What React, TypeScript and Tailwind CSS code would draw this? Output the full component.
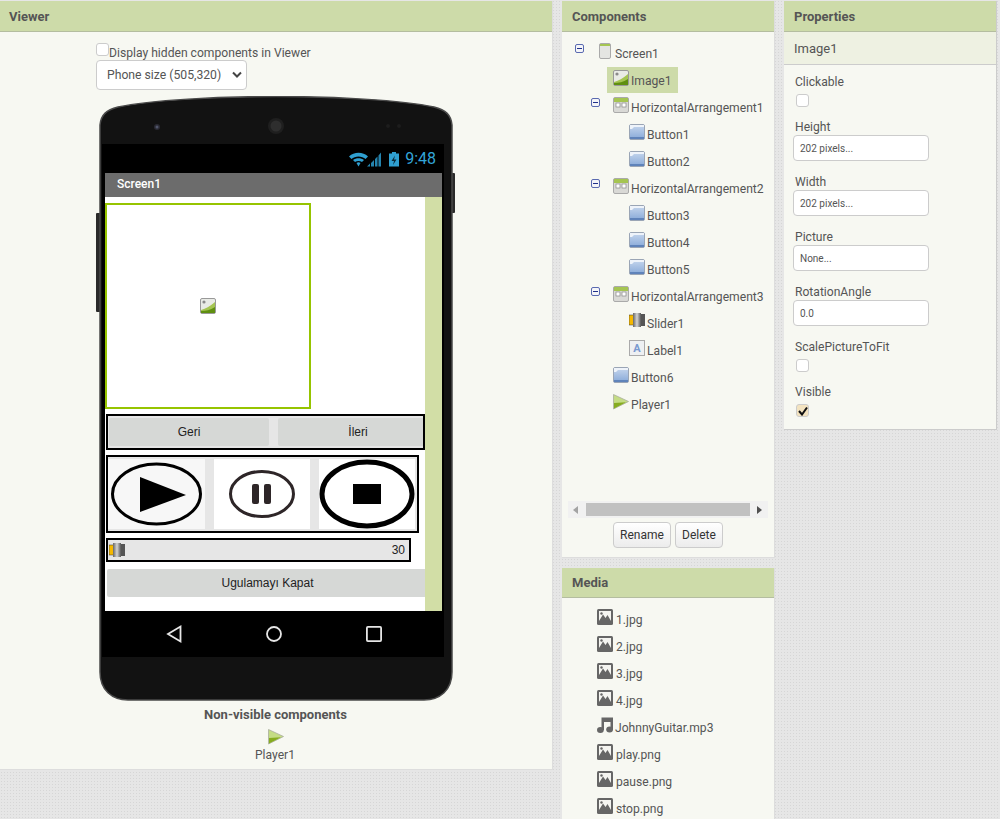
import React from 'react';

const ScreenIcon = () => (
  <svg width="16" height="16" viewBox="0 0 16 16">
    <rect x="2.5" y="0.5" width="11" height="15" rx="1.5" fill="#e4e5e2" stroke="#aaa" />
    <rect x="3" y="1" width="10" height="2" fill="#a5c552" />
  </svg>
);

const ImageIcon = () => (
  <svg width="16" height="16" viewBox="0 0 16 16">
    <rect x="0.5" y="0.5" width="15" height="15" rx="1.5" fill="#e9ebe6" stroke="#999" />
    <circle cx="4" cy="4" r="1.6" fill="#8a8a8a" />
    <path d="M1 12 C5 11 9 9 15 4 V15 H1 Z" fill="#a5c552" />
    <path d="M1 15 V13 C6 13 10 12 15 9 V15 Z" fill="#5f8f10" />
  </svg>
);

const ArrangementIcon = () => (
  <svg width="16" height="16" viewBox="0 0 16 16">
    <rect x="0.5" y="0.5" width="15" height="15" rx="1.5" fill="#d9d9d6" stroke="#aaa" />
    <rect x="1" y="1" width="14" height="4" fill="#a5c552" />
    <rect x="3" y="6" width="4" height="4" fill="#fff" stroke="#888" strokeWidth="0.7" />
    <rect x="9" y="6" width="4" height="4" fill="#fff" stroke="#888" strokeWidth="0.7" />
  </svg>
);

const ButtonIcon = () => (
  <svg width="16" height="16" viewBox="0 0 16 16">
    <defs>
      <linearGradient id="btn-grad" x1="0" y1="0" x2="0" y2="1">
        <stop offset="0" stopColor="#c8d8ee" />
        <stop offset="1" stopColor="#86a8d8" />
      </linearGradient>
    </defs>
    <rect x="0.5" y="0.5" width="15" height="15" rx="1.5" fill="url(#btn-grad)" stroke="#9aa5b5" />
    <path d="M1 1 H15 V3 H5 L3 5 H1 Z" fill="#eef3fa" />
    <rect x="1" y="13" width="14" height="2" fill="#5f83ba" />
  </svg>
);

const SliderIcon = () => (
  <svg width="16" height="14" viewBox="0 0 16 14">
    <defs>
      <linearGradient id="slider-grad" x1="0" y1="0" x2="1" y2="0">
        <stop offset="0" stopColor="#666" />
        <stop offset="0.5" stopColor="#d4d4d4" />
        <stop offset="1" stopColor="#555" />
      </linearGradient>
    </defs>
    <rect x="0" y="2" width="5" height="10" fill="#f5b800" stroke="#333" strokeWidth="0.5" />
    <rect x="4" y="0" width="8" height="14" fill="url(#slider-grad)" />
    <rect x="12" y="1" width="4" height="12" fill="#555" />
  </svg>
);

const LabelIcon = () => (
  <svg width="16" height="16" viewBox="0 0 16 16">
    <rect x="0.5" y="0.5" width="15" height="15" fill="#eef0f2" stroke="#aaa" />
    <text x="8" y="12" textAnchor="middle" fontSize="11" fontWeight="700" fontFamily="Roboto, sans-serif" fill="#7a9ad0">A</text>
  </svg>
);

const PlayerIcon = () => (
  <svg width="16" height="16" viewBox="0 0 16 16">
    <path d="M0.5 0.5 L15.5 7.5 L0.5 15 Z" fill="#c4dc84" stroke="#a9ad9e" strokeWidth="0.8" />
    <path d="M1 9 L13 8.2 L1 14.5 Z" fill="#86ac20" />
  </svg>
);

const PhotoIcon = () => (
  <svg width="16" height="16" viewBox="0 0 16 16">
    <rect width="16" height="16" rx="1.5" fill="#666" />
    <rect x="2" y="2" width="12" height="10" fill="#f4f4f0" />
    <path d="M2 12 L6 5.5 L8.5 9 L10.5 6 L14 12 Z" fill="#666" />
    <circle cx="4.5" cy="4.5" r="1.2" fill="#666" />
  </svg>
);

const MusicIcon = () => (
  <svg width="16" height="16" viewBox="0 0 16 16" fill="#666">
    <path d="M4.5 0.5 H16 V12.5 H13.5 V5 H7 V13 H4.5 Z" />
    <ellipse cx="3.4" cy="13" rx="3.4" ry="3" />
    <ellipse cx="12.6" cy="12.6" rx="3.4" ry="3" />
  </svg>
);

const Minus = () => (
  <svg width="9" height="9" viewBox="0 0 9 9" className="mt-[4px] shrink-0">
    <rect x="0.5" y="0.5" width="8" height="8" rx="1.5" fill="#f4f5f8" stroke="#5a6ab0" />
    <rect x="2" y="4" width="5" height="1" fill="#20308a" />
  </svg>
);

const treeRows = [
  { name: 'Screen1', icon: <ScreenIcon />, pad: 'pl-[13px]', minus: true },
  { name: 'Image1', icon: <ImageIcon />, pad: 'pl-[45px]', selected: true },
  { name: 'HorizontalArrangement1', icon: <ArrangementIcon />, pad: 'pl-[29px]', minus: true },
  { name: 'Button1', icon: <ButtonIcon />, pad: 'pl-[61px]' },
  { name: 'Button2', icon: <ButtonIcon />, pad: 'pl-[61px]' },
  { name: 'HorizontalArrangement2', icon: <ArrangementIcon />, pad: 'pl-[29px]', minus: true },
  { name: 'Button3', icon: <ButtonIcon />, pad: 'pl-[61px]' },
  { name: 'Button4', icon: <ButtonIcon />, pad: 'pl-[61px]' },
  { name: 'Button5', icon: <ButtonIcon />, pad: 'pl-[61px]' },
  { name: 'HorizontalArrangement3', icon: <ArrangementIcon />, pad: 'pl-[29px]', minus: true },
  { name: 'Slider1', icon: <SliderIcon />, pad: 'pl-[61px]' },
  { name: 'Label1', icon: <LabelIcon />, pad: 'pl-[61px]' },
  { name: 'Button6', icon: <ButtonIcon />, pad: 'pl-[45px]' },
  { name: 'Player1', icon: <PlayerIcon />, pad: 'pl-[45px]' },
];

const mediaFiles = ['1.jpg', '2.jpg', '3.jpg', '4.jpg', 'JohnnyGuitar.mp3', 'play.png', 'pause.png', 'stop.png'];

const PanelHeader = ({ title, pad, size = 'h-[31px] pt-[2px]' }: { title: string; pad: string; size?: string }) => (
  <div className={`shrink-0 bg-[#cddba9] border-b border-[#b4bda0] flex items-center text-[13px] font-bold text-[#555] ${size} ${pad}`}>
    {title}
  </div>
);

const Checkbox = ({ checked }: { checked?: boolean }) => (
  <div className={`w-[13px] h-[13px] shrink-0 rounded-[3px] border border-[#ccc] flex items-center justify-center ${checked ? 'bg-[#f3e3c0]' : 'bg-white'}`}>
    {checked && (
      <svg width="10" height="10" viewBox="0 0 10 10">
        <path d="M1 5 L4 8.5 L9 1.5" fill="none" stroke="#111" strokeWidth="2" />
      </svg>
    )}
  </div>
);

const PropLabel = ({ children }: { children: React.ReactNode }) => (
  <div className="h-[16px] leading-[16px] text-[12.1px] text-[#555] pl-[2px]">{children}</div>
);

const PropInput = ({ value }: { value: string }) => (
  <div className="w-[136px] h-[26px] rounded-[4px] border border-[#ccc] bg-white pl-[6px] flex items-center text-[10px] text-[#555]">
    {value}
  </div>
);

const PhoneShell = () => (
  <svg width="360" height="605" viewBox="96 96 360 605" className="absolute left-0 top-0">
    <rect x="96" y="213" width="5" height="99" rx="1" fill="#2a2a2a" />
    <rect x="451" y="173" width="4" height="40" rx="1" fill="#2a2a2a" />
    <path
      d="M100 672 L100 125 C101 115 106 110 118 107 C150 100 220 96.5 276 96.5 C332 96.5 402 100 434 107 C446 110 451 115 452 125 L452 672 C452 690 440 700 424 700 L128 700 C112 700 100 690 100 672 Z"
      fill="#121212"
      stroke="#4a4a4a"
      strokeWidth="1.5"
    />
    <circle cx="157" cy="127" r="3" fill="#2a2a33" />
    <circle cx="157" cy="127" r="1.5" fill="#50556a" />
    <circle cx="276" cy="126" r="8" fill="#1f1f1f" />
    <circle cx="276" cy="126" r="5.5" fill="#2e2e2e" />
    <circle cx="388" cy="126" r="2" fill="#1d1d1d" />
    <circle cx="399" cy="126" r="2" fill="#1d1d1d" />
  </svg>
);

const StatusIcons = () => (
  <svg width="52" height="16" viewBox="0 0 52 16" className="shrink-0">
    <path d="M2 5.5 C7 0.5 16 0.5 21 5.5 L18.5 8 C15 4.5 8 4.5 4.5 8 Z" fill="#2f9fd0" />
    <path d="M6 9 C9 6.5 14 6.5 17 9 L15 11 C13 9.5 10 9.5 8 11 Z" fill="#2f9fd0" />
    <path d="M9.5 12 C11 11 12 11 13.5 12 L11.5 15.5 Z" fill="#2f9fd0" />
    <path d="M20 15.5 H23 V12.5 L20 15.5 Z M24 15.5 H27 V9 L24 12 Z M28 15.5 H30.5 V5.5 L28 8 Z M31.5 15.5 H34 V1.5 L31.5 4.5 Z" fill="#2583ad" />
    <rect x="42" y="2.5" width="10" height="13" fill="#2f9fd0" />
    <rect x="45" y="1" width="4" height="2" fill="#2f9fd0" />
    <path d="M48 4.5 L44.5 10 H47 L46 14 L49.5 8.5 H47 Z" fill="#0b2a38" />
  </svg>
);

const NavBar = () => (
  <div className="h-[46px] flex items-center pl-[60px] gap-[76px]">
    <svg width="24" height="24" viewBox="0 0 24 24">
      <path d="M18.5 4.5 V19.5 L6 12 Z" fill="none" stroke="#e6e6e6" strokeWidth="1.8" />
    </svg>
    <svg width="24" height="24" viewBox="0 0 24 24">
      <circle cx="12" cy="12" r="7" fill="none" stroke="#e6e6e6" strokeWidth="1.8" />
    </svg>
    <svg width="24" height="24" viewBox="0 0 24 24">
      <rect x="4.9" y="4.9" width="14.2" height="14.2" rx="1" fill="none" stroke="#e6e6e6" strokeWidth="1.8" />
    </svg>
  </div>
);

const PlayPic = () => (
  <svg width="97" height="70" viewBox="0 0 97 70" className="bg-[#f7f7f7]">
    <ellipse cx="48.5" cy="35" rx="44" ry="30" fill="none" stroke="#000" strokeWidth="3" />
    <path d="M32 18 L78 36 L32 53 Z" fill="#000" />
  </svg>
);

const PausePic = () => (
  <svg width="96" height="70" viewBox="0 0 96 70" className="bg-white">
    <ellipse cx="48" cy="35" rx="31.5" ry="22.5" fill="none" stroke="#2e2628" strokeWidth="3" />
    <rect x="38" y="25" width="7" height="20" rx="2" fill="#2e2628" />
    <rect x="50" y="25" width="7" height="20" rx="2" fill="#2e2628" />
  </svg>
);

const StopPic = () => (
  <svg width="96" height="70" viewBox="0 0 96 70" className="bg-white">
    <ellipse cx="48" cy="35" rx="45" ry="32" fill="none" stroke="#000" strokeWidth="5" />
    <rect x="34" y="25" width="28" height="20" fill="#000" />
  </svg>
);

const PhoneScreen = () => (
  <div className="w-[342px] bg-black">
    <div className="h-[29px] flex items-center justify-end pr-[8px] gap-[6px]">
      <StatusIcons />
      <span className="text-[16px] text-[#33a5d8] leading-none">9:48</span>
    </div>
    <div className="ml-[3px] w-[337px]">
      <div className="h-[24px] bg-[#6c6c6c] pl-[12px] pb-[2px] flex items-center text-[12px] font-medium text-white">Screen1</div>
      <div className="flex h-[414px]">
        <div className="w-[320px] bg-white overflow-hidden pt-[6px] font-['Liberation_Sans',Arial,sans-serif] text-[12px] text-[#222]">
          <div className="w-[206px] h-[206px] border-2 border-[#96c400] flex items-center justify-center">
            <ImageIcon />
          </div>
          <div className="mt-[5px] ml-px w-[319px] h-[36px] border-2 border-black bg-[#e6e6e6] flex gap-[9px] pl-px py-[2px] overflow-hidden">
            <div className="w-[160px] shrink-0 bg-[#d6d8d6] rounded-[2px] flex items-center justify-center">Geri</div>
            <div className="w-[160px] shrink-0 bg-[#d6d8d6] rounded-[2px] flex items-center justify-center">İleri</div>
          </div>
          <div className="mt-[5px] ml-px w-[313px] h-[78px] border-2 border-black bg-[#e6e6e6] flex gap-[9px] py-[2px]">
            <PlayPic />
            <PausePic />
            <StopPic />
          </div>
          <div className="mt-[5px] ml-px w-[305px] h-[24px] border-2 border-black bg-[#e6e6e6] flex items-center justify-between pl-px pr-[4px]">
            <SliderIcon />
            <span>30</span>
          </div>
          <div className="mt-[7px] ml-[2px] w-[330px] h-[28px] bg-[#d6d8d6] rounded-[2px] flex items-center justify-center pr-[9px]">
            Ugulamayı Kapat
          </div>
        </div>
        <div className="w-[17px] bg-[#d2dea6]" />
      </div>
    </div>
    <NavBar />
  </div>
);

export default function App() {
  return (
    <div className="w-[1000px] h-[819px] overflow-hidden flex items-start gap-[9px] pt-px bg-[#e6e6e6] bg-[radial-gradient(#d6d6d6_1px,transparent_1px)] bg-[length:3px_3px] font-['Roboto',sans-serif] text-[#555]">
      {/* Viewer */}
      <div className="w-[553px] h-[769px] shrink-0 bg-[#f7f8f2] border-r border-b border-[#ddd]">
        <PanelHeader title="Viewer" pad="pl-[9px]" />
        <div className="ml-[96px] mt-[11px] h-[16px] flex items-start text-[12.13px] leading-[16px]">
          <Checkbox />
          <span className="mt-[2px]">Display hidden components in Viewer</span>
        </div>
        <div className="ml-[96px] mt-px w-[151px] h-[30px] bg-white border border-[#ccc] rounded-[4px] flex items-center justify-between pl-[10px] pr-[3px] text-[12.2px]">
          <span>Phone size (505,320)</span>
          <svg width="12" height="8" viewBox="0 0 12 8">
            <path d="M2 1.5 L6 5.5 L10 1.5" fill="none" stroke="#444" strokeWidth="2" />
          </svg>
        </div>
        <div className="relative ml-[96px] mt-[6px] w-[360px] h-[605px] pt-[48px] pl-[6px]">
          <PhoneShell />
          <div className="relative">
            <PhoneScreen />
          </div>
        </div>
        <div className="mt-[6px] text-center text-[13px] font-bold leading-[16px] pr-px">Non-visible components</div>
        <div className="mt-[6px] flex flex-col items-center">
          <PlayerIcon />
          <span className="mt-[2px] text-[12.1px] leading-[16px] pr-[2px]">Player1</span>
        </div>
      </div>

      {/* Components and Media */}
      <div className="w-[213px] shrink-0 flex flex-col gap-[10px]">
        <div className="h-[557px] bg-[#f7f8f2] border-r border-b border-[#ddd] flex flex-col">
          <PanelHeader title="Components" pad="pl-[10px]" />
          <div className="flex-1 pt-[8px]">
            {treeRows.map((row) => (
              <div key={row.name} className={`h-[27px] flex items-start ${row.pad}`}>
                {row.minus && (
                  <div className="w-[16px] shrink-0">
                    <Minus />
                  </div>
                )}
                <div className={`h-[26px] flex items-start px-[6px] pt-[3px] gap-[2px] ${row.selected ? 'bg-[#cddba9]' : ''}`}>
                  <div className="w-[16px] h-[16px] flex justify-center">{row.icon}</div>
                  <span className="text-[12.13px] leading-[16px] mt-[3px] whitespace-nowrap">{row.name}</span>
                </div>
              </div>
            ))}
          </div>
          <div className="mx-[6px] h-[17px] bg-[#f1f1f1] flex items-center justify-between px-[5px]">
            <svg width="6" height="8" viewBox="0 0 6 8"><path d="M5 0 V8 L0 4 Z" fill="#a3a3a3" /></svg>
            <div className="w-[164px] h-[13px] bg-[#c1c1c1]" />
            <svg width="6" height="8" viewBox="0 0 6 8"><path d="M0 0 V8 L5 4 Z" fill="#505050" /></svg>
          </div>
          <div className="mt-[4px] mb-[9px] pl-[51px] flex gap-[4px] text-[12px] text-[#333]">
            <div className="w-[58px] h-[26px] rounded-[4px] border border-[#ccc] bg-gradient-to-b from-white to-[#ececec] flex items-center justify-center">Rename</div>
            <div className="w-[48px] h-[26px] rounded-[4px] border border-[#ccc] bg-gradient-to-b from-white to-[#ececec] flex items-center justify-center">Delete</div>
          </div>
        </div>
        <div className="h-[260px] bg-[#f7f8f2] border-r border-[#ddd]">
          <PanelHeader title="Media" pad="pl-[10px]" size="h-[30px]" />
          <div className="pt-[11px] pl-[35px]">
            {mediaFiles.map((file) => (
              <div key={file} className="h-[27px] flex items-start gap-[3px]">
                {file.endsWith('.mp3') ? <MusicIcon /> : <PhotoIcon />}
                <span className={`text-[12.1px] leading-[16px] mt-[3px] ${file.endsWith('.mp3') ? '-ml-px' : ''}`}>{file}</span>
              </div>
            ))}
          </div>
        </div>
      </div>

      {/* Properties */}
      <div className="w-[213px] h-[429px] shrink-0 bg-[#f7f8f2] border-r border-b border-[#ccc]">
        <PanelHeader title="Properties" pad="pl-[10px]" />
        <div className="h-[33px] bg-[#eef1e2] border-b border-[#ccc] pl-[10px] pt-[2px] flex items-center text-[13px]">Image1</div>
        <div className="pl-[9px] pt-[9px]">
          <PropLabel>Clickable</PropLabel>
          <div className="mt-[4px] ml-[3px]"><Checkbox /></div>
          <div className="mt-[12px]"><PropLabel>Height</PropLabel></div>
          <PropInput value="202 pixels..." />
          <div className="mt-[13px]"><PropLabel>Width</PropLabel></div>
          <PropInput value="202 pixels..." />
          <div className="mt-[13px]"><PropLabel>Picture</PropLabel></div>
          <PropInput value="None..." />
          <div className="mt-[13px]"><PropLabel>RotationAngle</PropLabel></div>
          <PropInput value="0.0" />
          <div className="mt-[13px]"><PropLabel>ScalePictureToFit</PropLabel></div>
          <div className="mt-[4px] ml-[3px]"><Checkbox /></div>
          <div className="mt-[12px]"><PropLabel>Visible</PropLabel></div>
          <div className="mt-[4px] ml-[3px]"><Checkbox checked /></div>
        </div>
      </div>
    </div>
  );
}
